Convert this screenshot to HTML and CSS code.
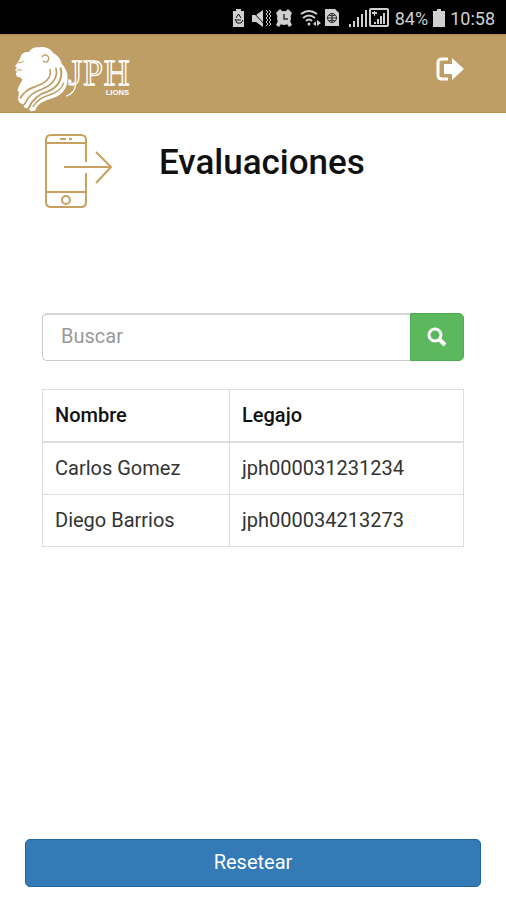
FILE: index.html
```html
<!DOCTYPE html>
<html lang="es">
<head>
    <meta charset="UTF-8">
    <meta name="viewport" content="width=device-width, initial-scale=1.0">
    <title>Evaluaciones</title>
    <link rel="stylesheet" href="styles.css">
</head>
<body>

    <!-- ======= Status Bar ======= -->
    <div class="status-bar">
        <!-- battery saver, mute, alarm, wifi, data saver, signal, second sim -->
        <svg class="status-icons" width="158" height="20" viewBox="0 0 158 20" fill="#d0d0d0" aria-hidden="true">
            <path d="M4 3V1h5v2h3v16H1V3z"/>
            <g fill="none" stroke="#111" stroke-width="1"><path d="M4 10l2.500-4L9 10M3 11l2 4h4l2-3"/><path d="M4 12h5"/></g>
            <path d="M20 7h4l7-5v17l-7-5h-4z"/>
            <path d="M20 3l14 15" stroke="#000" stroke-width="1"/>
            <path d="M34 2l2 2-2 2 2 2-2 2 2 2-2 2 2 2-2 2M37 2l2 2-2 2 2 2-2 2 2 2-2 2 2 2-2 2" fill="none" stroke="#d0d0d0" stroke-width="1"/>
            <circle cx="52" cy="10" r="7"/>
            <path d="M44 5l4-4 3 3-5 5zM60 5l-4-4-3 3 5 5zM46 13l3 3-2 3-3-2zM58 13l-3 3 2 3 3-2z"/>
            <path d="M52 6v5h4" fill="none" stroke="#333" stroke-width="1.500"/>
            <g fill="none" stroke="#d0d0d0" stroke-width="2"><path d="M69 6q8-6 16 0M71 10q6-5 12 0M74 13q3-3 6 0"/></g>
            <circle cx="77" cy="16" r="1.500"/><path d="M81 16l3-3v5zM85 12l4 3-4 3z"/>
            <path d="M93 1h10l4 4v13H93z"/>
            <g fill="none" stroke="#222" stroke-width="1"><circle cx="100" cy="10" r="4.500"/><path d="M95 10h10M100 5v10M97 7q3 2 6 0M97 13q3-2 6 0"/></g>
            <path d="M117 16h2v3h-2zM121 13h2v6h-2zM125 9h2v10h-2zM129 6h2v13h-2zM133 2h2v17h-2z"/>
            <rect x="138" y="1" width="18" height="17" rx="1" fill="none" stroke="#d0d0d0" stroke-width="2"/>
            <path d="M142 14h2v2h-2zM145 11h2v5h-2zM148 8h2v8h-2zM151 5h2v11h-2zM140 4h5v2h-5zM142 3h1v5h-1z"/>
        </svg>
        <span>84%</span>
        <svg width="12" height="20" viewBox="0 0 12 20" fill="#d0d0d0" aria-hidden="true">
            <path d="M4 1h4v2h4v16H0V3h4z"/>
        </svg>
        <span>10:58</span>
    </div>

    <!-- ======= Header ======= -->
    <header class="navbar">
        <svg class="logo" viewBox="42 33 354 198" role="img" aria-label="JPH Lions">
            <g transform="translate(30 18)">
                <!-- head and mane -->
                <path fill="#fff" d="M31 50C33 38 44 32 57 33 62 22 75 17 88 19 105 15 122 24 130 36 144 44 153 55 155 68 171 84 175 104 172 122 168 147 154 162 130 171 103 180 85 184 75 209L62 211 55 202 43 200 41 190 30 186 24 176 27 153 22 148C26 136 32 124 38 116L30 109 22 108 17 99 21 92 15 87 21 80 15 75 24 64Z"/>
                <!-- gaps between the locks -->
                <g fill="none" stroke="#be9e65" stroke-linecap="round">
                    <path stroke-width="4" d="M96 48C104 35 119 44 115 57 113 64 106 66 100 60"/>
                    <path stroke-width="3" d="M26 66L40 62M22 87L35 87"/>
                    <path stroke-width="5" d="M120 86C126 110 105 127 78 136 58 142 42 152 31 171"/>
                    <path stroke-width="5" d="M138 82C145 110 126 133 97 144 70 153 55 164 43 190"/>
                    <path stroke-width="6" d="M152 82C160 114 143 140 113 151 84 160 68 174 56 201"/>
                    <path stroke-width="4" d="M161 126C155 145 138 156 118 162 94 169 79 179 69 197"/>
                </g>
            </g>
            <g class="logo-name">
                <text x="205" y="151">J</text>
                <text x="249" y="151">P</text>
                <text x="311" y="151">H</text>
            </g>
            <path d="M227 148C226 166 214 178 199 183" fill="none" stroke="#fff" stroke-width="4"/>
            <text class="logo-sub" x="317" y="180">LIONS</text>
        </svg>
        <button class="logout" type="button" aria-label="Salir">
            <svg width="28" height="24" viewBox="0 0 28 24" aria-hidden="true">
                <path d="M12 2H6Q2 2 2 6v12q0 4 4 4h6" fill="none" stroke="#fff" stroke-width="3"/>
                <path d="M8 7h8V1l12 11-12 11v-6H8z" fill="#fff"/>
            </svg>
        </button>
    </header>

    <!-- ======= Main Content ======= -->
    <main class="content">
        <div class="page-title">
            <svg width="70" height="76" viewBox="0 0 70 76" fill="none" stroke="#c6a15f" stroke-width="2" aria-hidden="true">
                <path d="M42 29V7q0-5-5-5H7Q2 2 2 7v62q0 5 5 5h30q5 0 5-5V40"/>
                <path d="M2 10h40M2 59h40M20 34h47M52 19l15 15-15 16"/>
                <path d="M16 6h6M25 6h3"/>
                <circle cx="22" cy="67" r="4"/>
            </svg>
            <h1>Evaluaciones</h1>
        </div>

        <form class="search">
            <input type="text" placeholder="Buscar" aria-label="Buscar">
            <button type="submit" aria-label="Buscar">
                <svg width="20" height="20" viewBox="0 0 20 20" fill="none" stroke="#fff" aria-hidden="true">
                    <circle cx="8" cy="8" r="6" stroke-width="3"/>
                    <path d="M12 12l6 6" stroke-width="4"/>
                </svg>
            </button>
        </form>

        <table class="people">
            <thead>
                <tr>
                    <th class="name">Nombre</th>
                    <th>Legajo</th>
                </tr>
            </thead>
            <tbody>
                <tr>
                    <td>Carlos Gomez</td>
                    <td>jph000031231234</td>
                </tr>
                <tr>
                    <td>Diego Barrios</td>
                    <td>jph000034213273</td>
                </tr>
            </tbody>
        </table>
    </main>

    <!-- ======= Footer ======= -->
    <footer class="actions">
        <button class="reset" type="button">Resetear</button>
    </footer>
</body>
</html>
```
FILE: styles.css
```css
* {
    box-sizing: border-box;
}

body {
    display: flex;
    flex-direction: column;
    min-height: 100vh;
    margin: 0;
    background-color: #fff;
    color: #333;
    font-family: Roboto, sans-serif;
    font-size: 20px;
    line-height: 27px;
}

button, input {
    font: inherit;
}

.status-bar {
    display: flex;
    align-items: center;
    justify-content: flex-end;
    gap: 5px;
    height: 34px;
    padding: 2px 11px 0 0;
    background-color: #000;
    color: #d0d0d0;
    font-size: 18px;
}

.navbar {
    display: flex;
    align-items: flex-start;
    justify-content: space-between;
    height: 79px;
    padding: 11px 42px 0 14px;
    background-color: #be9e65;
    border-top: 1px solid #aa8a50;
    border-bottom: 1px solid #b4934f;
}

.logo {
    width: 118px;
    height: 66px;
}

.logo-name {
    fill: #c09d63;
    stroke: #fff;
    stroke-width: 4px;
    font-family: "Liberation Serif", serif;
    font-size: 108px;
}

.logo-sub {
    fill: #fff;
    font-family: "Liberation Sans", sans-serif;
    font-size: 23px;
    font-weight: bold;
}

.logout {
    margin-top: 11px;
    padding: 0;
    border: none;
    background: none;
    cursor: pointer;
}

.logout svg {
    display: block;
}

.content {
    flex: 1;
    padding: 20px 42px;
}

.page-title {
    display: flex;
    gap: 45px;
    padding-left: 2px;
    margin-bottom: 104px;
}

h1 {
    margin: 10px 0 0;
    color: #111;
    font-size: 35px;
    font-weight: 500;
    line-height: 40px;
}

.search {
    display: flex;
    height: 48px;
    margin-bottom: 28px;
}

.search input {
    flex: 1;
    min-width: 0;
    padding: 0 18px 2px;
    border: 1px solid #ccc;
    border-top: 2px solid #d6d6d6;
    border-right: none;
    border-radius: 5px 0 0 5px;
}

.search input::placeholder {
    color: #999;
}

.search button {
    display: flex;
    align-items: center;
    justify-content: center;
    width: 54px;
    padding: 0;
    border: 1px solid #4cae4c;
    border-radius: 0 5px 5px 0;
    background-color: #5cb85c;
    cursor: pointer;
}

.people {
    width: 100%;
    border-collapse: collapse;
}

.people th, .people td {
    padding: 12px;
    border: 1px solid #ddd;
    text-align: left;
}

.people th {
    border-bottom: 2px solid #ddd;
    color: #111;
    font-weight: 500;
}

.people .name {
    width: 187px;
}

.actions {
    padding: 0 25px 13px;
}

.reset {
    display: block;
    width: 100%;
    height: 48px;
    padding-bottom: 2px;
    border: 1px solid #1f65a0;
    border-radius: 5px;
    background-color: #337ab7;
    color: #fff;
    cursor: pointer;
}
```
